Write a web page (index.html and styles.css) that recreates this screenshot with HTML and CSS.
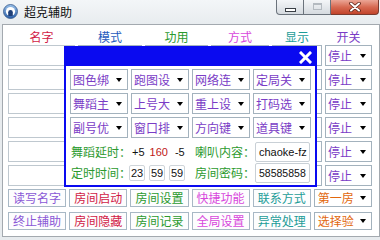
FILE: index.html
```html
<!DOCTYPE html>
<html>
<head>
<meta charset="utf-8">
<link rel="stylesheet" href="styles.css">
</head>
<body>
<div class="window">
  <div class="titlebar">
    <svg class="app-icon" width="15" height="15" viewBox="0 0 15 15">
      <defs>
        <linearGradient id="ring" x1="0" y1="0" x2="0" y2="1">
          <stop offset="0" stop-color="#9cc4ec"/>
          <stop offset="1" stop-color="#2a5ea8"/>
        </linearGradient>
      </defs>
      <circle cx="7.5" cy="7.5" r="7" fill="url(#ring)" stroke="#36598c" stroke-width="0.8"/>
      <circle cx="7.5" cy="7.5" r="4.6" fill="#ffffff"/>
      <path d="M5.2 12 V8.2 a2.3 2.3 0 0 1 4.6 0 V12 Z" fill="#1f3f78"/>
    </svg>
    <span class="title">超克辅助</span>
    <div class="controls">
      <div class="ctl min"><span class="min-glyph"></span></div>
      <div class="ctl max"><span class="max-glyph"></span></div>
      <div class="ctl close">
        <svg width="14" height="10" viewBox="0 0 14 10">
          <path d="M3 1.5 L11 8.5 M11 1.5 L3 8.5" stroke="#5a2418" stroke-width="3.6" stroke-linecap="round"/>
          <path d="M3 1.5 L11 8.5 M11 1.5 L3 8.5" stroke="#ffffff" stroke-width="2" stroke-linecap="round"/>
        </svg>
      </div>
    </div>
  </div>

  <div class="client">
    <div class="header">
      <span class="h c1 red">名字</span>
      <span class="h c2 blue">模式</span>
      <span class="h c3 green">功用</span>
      <span class="h c4 magenta">方式</span>
      <span class="h c5 teal">显示</span>
      <span class="h c6 purple">开关</span>
    </div>

    <div class="rows">
      <div class="row"><span class="input c1"></span><span class="box c2"></span><span class="box c3"></span><span class="box c4"></span><span class="box c5"></span><span class="dd c6 purple">停止<i class="arrow"></i></span></div>
      <div class="row"><span class="input c1"></span><span class="box c2"></span><span class="box c3"></span><span class="box c4"></span><span class="box c5"></span><span class="dd c6 purple">停止<i class="arrow"></i></span></div>
      <div class="row"><span class="input c1"></span><span class="box c2"></span><span class="box c3"></span><span class="box c4"></span><span class="box c5"></span><span class="dd c6 purple">停止<i class="arrow"></i></span></div>
      <div class="row"><span class="input c1"></span><span class="box c2"></span><span class="box c3"></span><span class="box c4"></span><span class="box c5"></span><span class="dd c6 purple">停止<i class="arrow"></i></span></div>
      <div class="row"><span class="input c1"></span><span class="box c2"></span><span class="box c3"></span><span class="box c4"></span><span class="box c5"></span><span class="dd c6 purple">停止<i class="arrow"></i></span></div>
      <div class="row"><span class="input c1"></span><span class="box c2"></span><span class="box c3"></span><span class="box c4"></span><span class="box c5"></span><span class="dd c6 purple">停止<i class="arrow"></i></span></div>
    </div>

    <div class="buttons">
      <span class="btn violet">读写名字</span>
      <span class="btn red">房间启动</span>
      <span class="btn green">房间设置</span>
      <span class="btn magenta">快捷功能</span>
      <span class="btn teal">联系方式</span>
      <span class="dd btn-dd orange">第一房<i class="arrow"></i></span>
      <span class="btn violet">终止辅助</span>
      <span class="btn red">房间隐藏</span>
      <span class="btn green">房间记录</span>
      <span class="btn magenta">全局设置</span>
      <span class="btn teal">异常处理</span>
      <span class="dd btn-dd orange">选择验<i class="arrow"></i></span>
    </div>

    <div class="panel">
      <div class="panel-bar">
        <svg class="panel-x" width="13" height="13" viewBox="0 0 13 13">
          <path d="M2 2 L11 11 M11 2 L2 11" stroke="#ffffff" stroke-width="3" stroke-linecap="square"/>
        </svg>
      </div>
      <div class="panel-body">
        <div class="grid">
          <span class="dd purple">图色绑<i class="arrow"></i></span>
          <span class="dd purple">跑图设<i class="arrow"></i></span>
          <span class="dd purple">网络连<i class="arrow"></i></span>
          <span class="dd purple">定局关<i class="arrow"></i></span>
          <span class="dd purple">舞蹈主<i class="arrow"></i></span>
          <span class="dd purple">上号大<i class="arrow"></i></span>
          <span class="dd purple">重上设<i class="arrow"></i></span>
          <span class="dd purple">打码选<i class="arrow"></i></span>
          <span class="dd purple">副号优<i class="arrow"></i></span>
          <span class="dd purple">窗口排<i class="arrow"></i></span>
          <span class="dd purple">方向键<i class="arrow"></i></span>
          <span class="dd purple">道具键<i class="arrow"></i></span>
        </div>
        <div class="info">
          <div class="cell left r1">
            <span class="lbl green">舞蹈延时：</span>
            <span class="num plus">+5</span>
            <span class="num val">160</span>
            <span class="num minus">-5</span>
          </div>
          <div class="cell right r1">
            <span class="lbl green">喇叭内容：</span>
            <span class="field">chaoke-fz</span>
          </div>
          <div class="cell left r2">
            <span class="lbl lbl-short green">定时时间：</span>
            <span class="tbox">23</span>
            <span class="tbox">59</span>
            <span class="tbox">59</span>
          </div>
          <div class="cell right r2">
            <span class="lbl green">房间密码：</span>
            <span class="field digits">58585858</span>
          </div>
        </div>
      </div>
    </div>
  </div>
</div>
</body>
</html>
```

FILE: styles.css
```css
* { box-sizing: border-box; }

body {
  margin: 0;
  width: 380px;
  height: 240px;
  overflow: hidden;
  background: #e7ebee;
  font-family: "Noto Sans CJK SC", "Noto Sans", sans-serif;
  font-size: 12px;
}

.window {
  width: 380px;
  height: 240px;
  display: flex;
  flex-direction: column;
}

/* ---------- title bar ---------- */
.titlebar {
  height: 24px;
  flex: none;
  display: flex;
  align-items: flex-start;
  background: linear-gradient(#f3f6f8, #e8ecef);
}

.app-icon { margin: 4px 0 0 3px; flex: none; }

.title {
  margin: 4px 0 0 6px;
  line-height: 15px;
  color: #111;
}

.controls {
  margin-left: auto;
  margin-right: 1px;
  display: flex;
}

.ctl {
  height: 15px;
  border: 1px solid #6b737c;
  border-top: none;
  display: flex;
  align-items: center;
  justify-content: center;
}

.min {
  width: 28px;
  border-radius: 0 0 0 4px;
  background: linear-gradient(#f4f6f8, #d5dadf);
}

.max {
  width: 27px;
  border-left: none;
  background: linear-gradient(#f4f6f8, #d5dadf);
}

.close {
  width: 48px;
  border-left: none;
  border-color: #7a3a2e;
  border-radius: 0 0 4px 0;
  background: linear-gradient(#eba696, #d76a52 50%, #c2442b);
}

.min-glyph {
  width: 11px;
  height: 4px;
  margin-top: 5px;
  border: 1px solid #3a3f45;
  background: #fff;
}

.max-glyph {
  width: 9px;
  height: 7px;
  margin-top: -2px;
  border: 1px solid #b4bac0;
  border-top-width: 2px;
}

/* ---------- client ---------- */
.client {
  position: relative;
  flex: none;
  margin-left: 2px;
  width: 378px;
  height: 213px;
  background: #ffffff;
  border: 1px solid #a3a9af;
  padding-left: 5px;
}

.header {
  height: 20px;
  display: flex;
  gap: 3px;
  align-items: flex-end;
}

.h {
  text-align: center;
  line-height: 16px;
}

.c1 { width: 67px; }
.c2 { width: 64px; }
.c3 { width: 63px; }
.c4 { width: 58px; }
.c5 { width: 50px; }
.c6 { width: 47px; }

.rows {
  display: flex;
  flex-direction: column;
  gap: 3px;
}

.row {
  height: 21px;
  display: flex;
  gap: 3px;
}

.input {
  border: 1px solid #bfc8cf;
  background: #fff;
}

.box {
  border: 1px solid #a5b4bf;
  background: #fff;
}

.dd {
  display: flex;
  align-items: center;
  padding: 0 5px 0 2px;
  border: 1px solid #a3b2bd;
  background: #fff;
  line-height: 1;
  white-space: nowrap;
}

.arrow {
  margin-left: auto;
  width: 0;
  height: 0;
  border-left: 3.5px solid transparent;
  border-right: 3.5px solid transparent;
  border-top: 4px solid #000;
}

/* ---------- buttons ---------- */
.buttons {
  margin-top: 3px;
  width: 364px;
  display: grid;
  grid-template-columns: repeat(6, 1fr);
  grid-auto-rows: 18px;
  column-gap: 3px;
  row-gap: 5px;
}

.btn {
  display: flex;
  align-items: center;
  justify-content: center;
  border: 1px solid #a8b8c5;
  background: #fdfdfe;
  line-height: 1;
}

.btn-dd { padding-left: 3px; }

/* ---------- colours ---------- */
.red { color: #d11a46; }
.blue { color: #1f5bbd; }
.green { color: #2b9a2e; }
.magenta { color: #d848dc; }
.teal { color: #1c9c98; }
.purple { color: #7a3cc6; }
.violet { color: #8a58d6; }
.orange { color: #e2680e; }

/* ---------- overlay panel ---------- */
.panel {
  position: absolute;
  left: 61px;
  top: 21px;
  width: 253px;
  height: 141px;
  border: 2px solid #0a0af0;
  border-top: none;
  background: #ffffff;
}

.panel-bar {
  height: 20px;
  background: #0a0af0;
  display: flex;
  align-items: center;
  justify-content: flex-end;
  padding: 3px 3px 0 0;
}

.panel-body {
  padding: 3px 0 0 4px;
}

.grid {
  display: grid;
  grid-template-columns: repeat(4, 58px);
  grid-auto-rows: 21px;
  column-gap: 3px;
  row-gap: 3px;
}

.info {
  margin-top: 3px;
  display: grid;
  grid-template-columns: 119px 119px;
  grid-template-rows: 21px 20px;
  column-gap: 3px;
  row-gap: 1px;
}

.cell {
  display: flex;
  align-items: center;
}

.cell.left { padding-left: 1px; }
.cell.right { padding-left: 3px; padding-right: 1px; }

.lbl {
  width: 60px;
  flex: none;
  line-height: 1;
  white-space: nowrap;
}

.lbl-short { width: 58px; }

.num {
  font-family: "Liberation Sans", Arial, sans-serif;
  font-size: 11px;
  color: #111;
}

.plus { margin-left: 1px; }
.val { margin-left: 5px; color: #c01818; }
.minus { margin-left: 7px; }

.field {
  margin-left: auto;
  width: 57px;
  height: 20px;
  display: flex;
  align-items: center;
  padding-left: 3px;
  border: 1px solid #c9d0d6;
  border-radius: 2px;
  background: #fff;
  font-family: "Liberation Sans", Arial, sans-serif;
  font-size: 11px;
  color: #111;
  white-space: nowrap;
  overflow: hidden;
}

.field.digits { font-size: 10.5px; }

.tbox {
  width: 17px;
  height: 16px;
  margin-right: 4px;
  display: flex;
  align-items: center;
  justify-content: center;
  border: 1px solid #cfd5da;
  border-radius: 2px;
  font-family: "Liberation Sans", Arial, sans-serif;
  font-size: 11px;
  color: #111;
}
```
